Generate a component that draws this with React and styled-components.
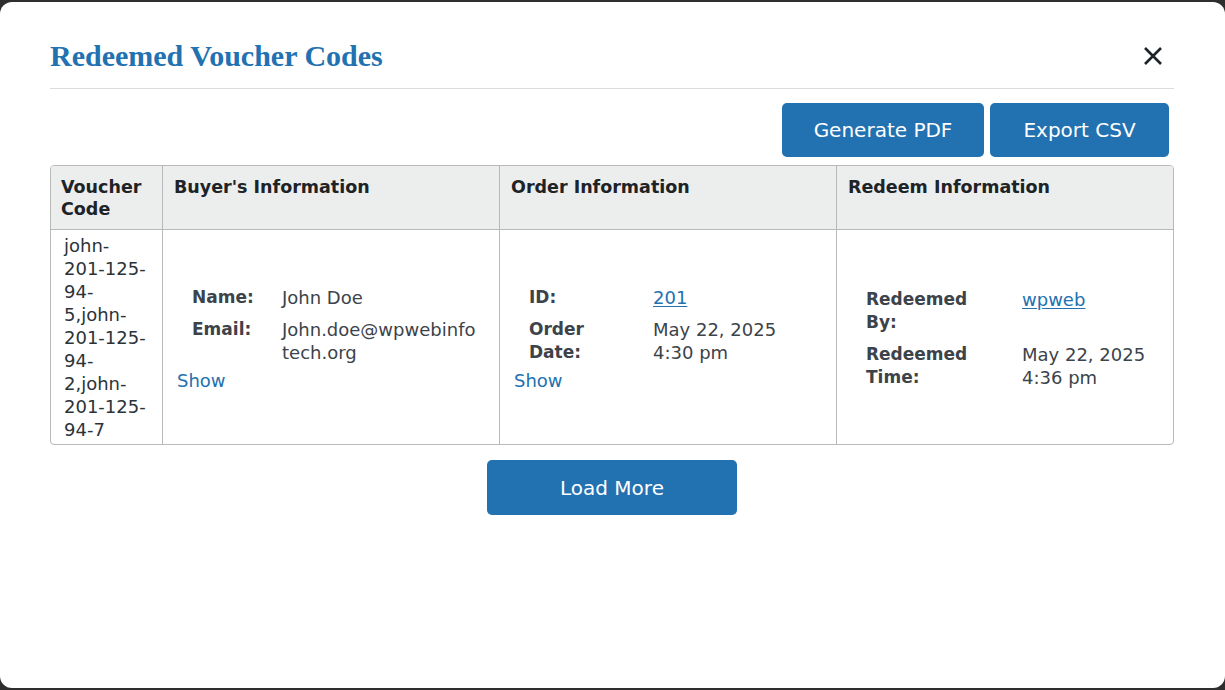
import React from "react";
import styled, { createGlobalStyle } from "styled-components";

const Global = createGlobalStyle`
  html, body { margin: 0; padding: 0; background: #2e2e2e; }
  body { font-family: "DejaVu Sans", Verdana, sans-serif; }
  * { box-sizing: border-box; }
`;

const Modal = styled.div`
  margin: 2px 0 0;
  height: 686px;
  background: #fff;
  border-radius: 12px;
  padding: 0 51px 0 50px;
  display: flex;
  flex-direction: column;
`;

const Header = styled.div`
  display: flex;
  align-items: center;
  justify-content: space-between;
  padding: 36px 0 14px;
  border-bottom: 1px solid #dcdcde;
`;

const Title = styled.h1`
  margin: 0;
  font-family: "Liberation Serif", "Times New Roman", serif;
  font-weight: 700;
  font-size: 30px;
  line-height: 36px;
  color: #2271b1;
`;

const Close = styled.button`
  border: 0;
  background: none;
  padding: 0;
  margin-right: 11px;
  width: 20px;
  height: 20px;
  display: flex;
  cursor: pointer;
`;

const Actions = styled.div`
  display: flex;
  justify-content: flex-end;
  gap: 6px;
  padding: 14px 5px 0 0;
`;

const Button = styled.button`
  height: ${(p) => p.$h || 54}px;
  width: ${(p) => p.$w}px;
  padding: 0;
  border: 0;
  border-radius: 5px;
  background: #2271b1;
  color: #fff;
  font-family: "DejaVu Sans", Verdana, sans-serif;
  font-size: 20px;
  cursor: pointer;
`;

const TableWrap = styled.div`
  margin-top: 8px;
  border: 1px solid #b9b9b9;
  border-radius: 4px;
  overflow: hidden;
`;

const Grid = styled.div`
  display: grid;
  grid-template-columns: 111px 337px 337px 1fr;
`;

const HeadCell = styled.div`
  background: #eceded;
  padding: ${(p) => (p.$first ? "10px 10px" : "10px 10px 10px 11px")};
  font-weight: 700;
  font-size: 17.5px;
  line-height: 22px;
  color: #1d2327;
  height: 64px;
  border-bottom: 1px solid #b9b9b9;
  border-left: ${(p) => (p.$first ? "0" : "1px solid #b9b9b9")};
`;

const BodyCell = styled.div`
  padding: ${(p) => (p.$code ? "4px 12px 3px 13px" : "4px 14px 3px 14px")};
  font-size: 18px;
  line-height: 23px;
  color: #2c3338;
  border-left: ${(p) => (p.$first ? "0" : "1px solid #b9b9b9")};
  display: flex;
  flex-direction: column;
  justify-content: ${(p) => (p.$code ? "flex-start" : "center")};
`;

const CodeLine = styled.span`
  display: block;
`;

const Info = styled.div`
  display: grid;
  grid-template-columns: ${(p) => p.$label}px 1fr;
  row-gap: 9px;
  padding: 2px 7px 0 15px;
`;

const Label = styled.div`
  font-weight: 700;
  font-size: 17px;
  color: #3c434a;
  padding-right: 20px;
`;

const Value = styled.div`
  color: #3c434a;
  word-break: ${(p) => (p.$breakAll ? "break-all" : "normal")};
`;

const ValueLink = styled.a`
  color: #2271b1;
  text-decoration: underline;
  text-underline-offset: 2px;
`;

const Show = styled.a`
  margin-top: 5px;
  color: #2271b1;
  text-decoration: none;
  cursor: pointer;
`;

const Footer = styled.div`
  display: flex;
  justify-content: center;
  padding-top: 15px;
`;

const XIcon = () => (
  <svg width="20" height="20" viewBox="0 0 20 20">
    <path d="M2 2 L18 18 M18 2 L2 18" stroke="#1d2327" strokeWidth="2.6" />
  </svg>
);

const codeLines = [
  "john-",
  "201-125-",
  "94-",
  "5,john-",
  "201-125-",
  "94-",
  "2,john-",
  "201-125-",
  "94-7",
];

export default function App() {
  return (
    <>
      <Global />
      <Modal>
        <Header>
          <Title>Redeemed Voucher Codes</Title>
          <Close aria-label="Close">
            <XIcon />
          </Close>
        </Header>
        <Actions>
          <Button $w={202}>Generate PDF</Button>
          <Button $w={179}>Export CSV</Button>
        </Actions>
        <TableWrap>
          <Grid>
            <HeadCell $first>Voucher Code</HeadCell>
            <HeadCell>Buyer's Information</HeadCell>
            <HeadCell>Order Information</HeadCell>
            <HeadCell>Redeem Information</HeadCell>

            <BodyCell $first $code>
              {codeLines.map((l, i) => (
                <CodeLine key={i}>{l}</CodeLine>
              ))}
            </BodyCell>
            <BodyCell>
              <Info $label={90}>
                <Label>Name:</Label>
                <Value>John Doe</Value>
                <Label>Email:</Label>
                <Value $breakAll>John.doe@wpwebinfotech.org</Value>
              </Info>
              <Show>Show</Show>
            </BodyCell>
            <BodyCell>
              <Info $label={124}>
                <Label>ID:</Label>
                <Value>
                  <ValueLink href="#">201</ValueLink>
                </Value>
                <Label>Order Date:</Label>
                <Value>May 22, 2025 4:30 pm</Value>
              </Info>
              <Show>Show</Show>
            </BodyCell>
            <BodyCell>
              <Info $label={156}>
                <Label>Redeemed By:</Label>
                <Value>
                  <ValueLink href="#">wpweb</ValueLink>
                </Value>
                <Label>Redeemed Time:</Label>
                <Value>May 22, 2025 4:36 pm</Value>
              </Info>
            </BodyCell>
          </Grid>
        </TableWrap>
        <Footer>
          <Button $w={250} $h={55}>Load More</Button>
        </Footer>
      </Modal>
    </>
  );
}
